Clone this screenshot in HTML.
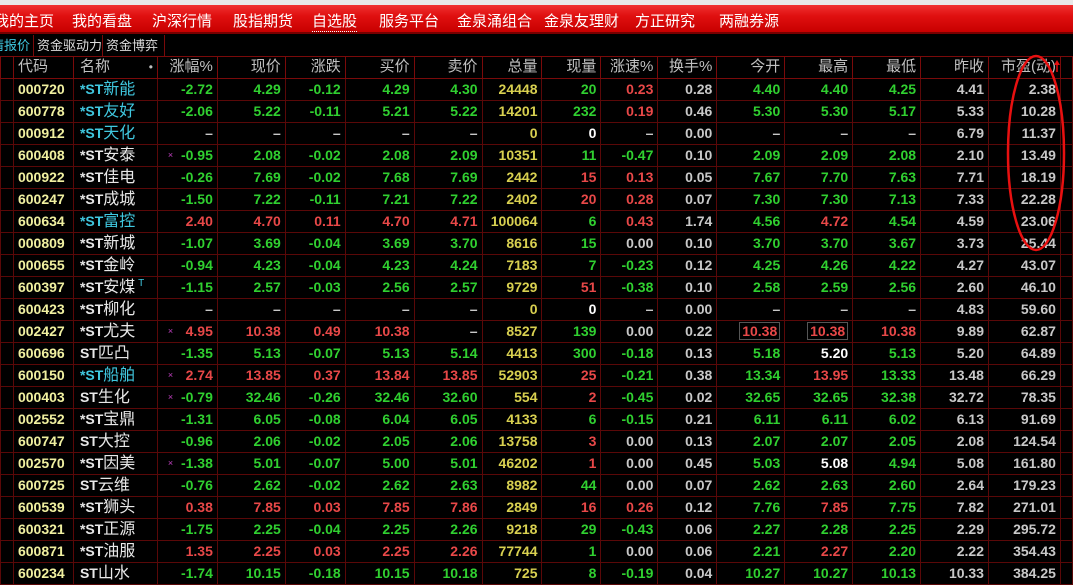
<!DOCTYPE html>
<html><head><meta charset="utf-8"><style>
*{margin:0;padding:0;box-sizing:border-box}
body{width:1073px;height:576px;background:#000;overflow:hidden;position:relative;font-family:"Liberation Sans","Noto Sans CJK SC",sans-serif}
#top{position:absolute;left:0;top:0;width:1073px;height:5px;background:#e8e8e8}
#nav{position:absolute;left:0;top:5px;width:1073px;height:29px;background:linear-gradient(#f03030,#e01010 40%,#c80000);border-bottom:2px solid #700}
#nav span{position:absolute;top:5px;color:#fff;font-size:15px;white-space:nowrap}
#tabs{position:absolute;left:0;top:35px;height:22px;width:1073px;overflow:hidden}
#tabs span{position:absolute;top:0;height:22px;line-height:21px;font-size:13px;color:#ddd;border-right:1px solid #7a0a0a;padding:0 3px;white-space:nowrap;overflow:hidden}
table{position:absolute;left:0;top:56px;border-collapse:collapse;table-layout:fixed}
tr{height:21.9px}
td{height:21.9px;border:1px solid #5a0808;font-size:14px;font-weight:bold;text-align:right;padding:0 4px 0 0;white-space:nowrap;overflow:hidden;color:#c8c8c8;line-height:20px}
tr.h td{font-weight:normal;font-size:15px;color:#c0c0c0;border-color:#7a0a0a}
td.c{color:#f0f0a0;text-align:left;padding-left:4px}
td.n{text-align:left;padding-left:6px;font-weight:normal;font-size:16px;color:#e8e8e8}
td.n b{font-weight:bold;font-size:14px}
td.n.cy{color:#40c8e0}
.g{color:#30d030}.r{color:#e84848}.y{color:#d8d050}.w{color:#fff}
.x{color:#c040c0;font-size:9px;float:left;margin-left:10px;font-weight:normal}
.bx{border:1px solid #555;padding:0 2px}
.t{color:#40c8e0;font-size:10px;position:relative;top:-6px;line-height:10px}
</style></head><body>
<div id="top"></div>
<div id="nav">
<span style="left:-6px">我的主页</span><span style="left:72px">我的看盘</span><span style="left:152px">沪深行情</span><span style="left:233px">股指期货</span><span style="left:312px;border-bottom:1px dotted #fff">自选股</span><span style="left:379px">服务平台</span><span style="left:457px">金泉涌组合</span><span style="left:544px">金泉友理财</span><span style="left:635px">方正研究</span><span style="left:719px">两融券源</span>
</div>
<div id="tabs"><span style="left:-12px;color:#40c8e0;width:46px">情报价</span><span style="left:34px;width:69px">资金驱动力</span><span style="left:103px;width:62px">资金博弈</span></div>
<table>
<colgroup><col style="width:13px"><col style="width:60px"><col style="width:84px"><col style="width:60px"><col style="width:68px"><col style="width:60px"><col style="width:69px"><col style="width:68px"><col style="width:60px"><col style="width:59px"><col style="width:57px"><col style="width:59px"><col style="width:68px"><col style="width:68px"><col style="width:68px"><col style="width:68px"><col style="width:72px"><col style="width:12px"></colgroup>
<tr class="h"><td></td><td style="text-align:left;padding-left:4px">代码</td><td style="text-align:left;padding-left:6px">名称 <span style="float:right;font-size:12px">•</span></td><td>涨幅%</td><td>现价</td><td>涨跌</td><td>买价</td><td>卖价</td><td>总量</td><td>现量</td><td>涨速%</td><td>换手%</td><td>今开</td><td>最高</td><td>最低</td><td>昨收</td><td>市盈(动)</td><td></td></tr>
<tr style="border-bottom:1px solid #40a040"><td></td><td class="c">000720</td><td class="n cy"><b>*ST</b>新能</td><td class="g">-2.72</td><td class="g">4.29</td><td class="g">-0.12</td><td class="g">4.29</td><td class="g">4.30</td><td class="y">24448</td><td class="g">20</td><td class="r">0.23</td><td>0.28</td><td class="g">4.40</td><td class="g">4.40</td><td class="g">4.25</td><td>4.41</td><td>2.38</td><td></td></tr>
<tr><td></td><td class="c">600778</td><td class="n cy"><b>*ST</b>友好</td><td class="g">-2.06</td><td class="g">5.22</td><td class="g">-0.11</td><td class="g">5.21</td><td class="g">5.22</td><td class="y">14201</td><td class="g">232</td><td class="r">0.19</td><td>0.46</td><td class="g">5.30</td><td class="g">5.30</td><td class="g">5.17</td><td>5.33</td><td>10.28</td><td></td></tr>
<tr><td></td><td class="c">000912</td><td class="n cy"><b>*ST</b>天化</td><td>–</td><td>–</td><td>–</td><td>–</td><td>–</td><td class="y">0</td><td class="w">0</td><td>–</td><td>0.00</td><td>–</td><td>–</td><td>–</td><td>6.79</td><td>11.37</td><td></td></tr>
<tr><td></td><td class="c">600408</td><td class="n"><b>*ST</b>安泰</td><td class="g"><span class="x">×</span>-0.95</td><td class="g">2.08</td><td class="g">-0.02</td><td class="g">2.08</td><td class="g">2.09</td><td class="y">10351</td><td class="g">11</td><td class="g">-0.47</td><td>0.10</td><td class="g">2.09</td><td class="g">2.09</td><td class="g">2.08</td><td>2.10</td><td>13.49</td><td></td></tr>
<tr><td></td><td class="c">000922</td><td class="n"><b>*ST</b>佳电</td><td class="g">-0.26</td><td class="g">7.69</td><td class="g">-0.02</td><td class="g">7.68</td><td class="g">7.69</td><td class="y">2442</td><td class="r">15</td><td class="r">0.13</td><td>0.05</td><td class="g">7.67</td><td class="g">7.70</td><td class="g">7.63</td><td>7.71</td><td>18.19</td><td></td></tr>
<tr><td></td><td class="c">600247</td><td class="n"><b>*ST</b>成城</td><td class="g">-1.50</td><td class="g">7.22</td><td class="g">-0.11</td><td class="g">7.21</td><td class="g">7.22</td><td class="y">2402</td><td class="r">20</td><td class="r">0.28</td><td>0.07</td><td class="g">7.30</td><td class="g">7.30</td><td class="g">7.13</td><td>7.33</td><td>22.28</td><td></td></tr>
<tr><td></td><td class="c">600634</td><td class="n cy"><b>*ST</b>富控</td><td class="r">2.40</td><td class="r">4.70</td><td class="r">0.11</td><td class="r">4.70</td><td class="r">4.71</td><td class="y">100064</td><td class="g">6</td><td class="r">0.43</td><td>1.74</td><td class="g">4.56</td><td class="r">4.72</td><td class="g">4.54</td><td>4.59</td><td>23.06</td><td></td></tr>
<tr><td></td><td class="c">000809</td><td class="n"><b>*ST</b>新城</td><td class="g">-1.07</td><td class="g">3.69</td><td class="g">-0.04</td><td class="g">3.69</td><td class="g">3.70</td><td class="y">8616</td><td class="g">15</td><td>0.00</td><td>0.10</td><td class="g">3.70</td><td class="g">3.70</td><td class="g">3.67</td><td>3.73</td><td>25.44</td><td></td></tr>
<tr><td></td><td class="c">000655</td><td class="n"><b>*ST</b>金岭</td><td class="g">-0.94</td><td class="g">4.23</td><td class="g">-0.04</td><td class="g">4.23</td><td class="g">4.24</td><td class="y">7183</td><td class="g">7</td><td class="g">-0.23</td><td>0.12</td><td class="g">4.25</td><td class="g">4.26</td><td class="g">4.22</td><td>4.27</td><td>43.07</td><td></td></tr>
<tr><td></td><td class="c">600397</td><td class="n"><b>*ST</b>安煤<span class="t"> T</span></td><td class="g">-1.15</td><td class="g">2.57</td><td class="g">-0.03</td><td class="g">2.56</td><td class="g">2.57</td><td class="y">9729</td><td class="r">51</td><td class="g">-0.38</td><td>0.10</td><td class="g">2.58</td><td class="g">2.59</td><td class="g">2.56</td><td>2.60</td><td>46.10</td><td></td></tr>
<tr><td></td><td class="c">600423</td><td class="n"><b>*ST</b>柳化</td><td>–</td><td>–</td><td>–</td><td>–</td><td>–</td><td class="y">0</td><td class="w">0</td><td>–</td><td>0.00</td><td>–</td><td>–</td><td>–</td><td>4.83</td><td>59.60</td><td></td></tr>
<tr><td></td><td class="c">002427</td><td class="n"><b>*ST</b>尤夫</td><td class="r"><span class="x">×</span>4.95</td><td class="r">10.38</td><td class="r">0.49</td><td class="r">10.38</td><td>–</td><td class="y">8527</td><td class="g">139</td><td>0.00</td><td>0.22</td><td class="r"><span class="bx">10.38</span></td><td class="r"><span class="bx">10.38</span></td><td class="r">10.38</td><td>9.89</td><td>62.87</td><td></td></tr>
<tr><td></td><td class="c">600696</td><td class="n"><b>ST</b>匹凸</td><td class="g">-1.35</td><td class="g">5.13</td><td class="g">-0.07</td><td class="g">5.13</td><td class="g">5.14</td><td class="y">4413</td><td class="g">300</td><td class="g">-0.18</td><td>0.13</td><td class="g">5.18</td><td class="w">5.20</td><td class="g">5.13</td><td>5.20</td><td>64.89</td><td></td></tr>
<tr><td></td><td class="c">600150</td><td class="n cy"><b>*ST</b>船舶</td><td class="r"><span class="x">×</span>2.74</td><td class="r">13.85</td><td class="r">0.37</td><td class="r">13.84</td><td class="r">13.85</td><td class="y">52903</td><td class="r">25</td><td class="g">-0.21</td><td>0.38</td><td class="g">13.34</td><td class="r">13.95</td><td class="g">13.33</td><td>13.48</td><td>66.29</td><td></td></tr>
<tr><td></td><td class="c">000403</td><td class="n"><b>ST</b>生化</td><td class="g"><span class="x">×</span>-0.79</td><td class="g">32.46</td><td class="g">-0.26</td><td class="g">32.46</td><td class="g">32.60</td><td class="y">554</td><td class="r">2</td><td class="g">-0.45</td><td>0.02</td><td class="g">32.65</td><td class="g">32.65</td><td class="g">32.38</td><td>32.72</td><td>78.35</td><td></td></tr>
<tr><td></td><td class="c">002552</td><td class="n"><b>*ST</b>宝鼎</td><td class="g">-1.31</td><td class="g">6.05</td><td class="g">-0.08</td><td class="g">6.04</td><td class="g">6.05</td><td class="y">4133</td><td class="g">6</td><td class="g">-0.15</td><td>0.21</td><td class="g">6.11</td><td class="g">6.11</td><td class="g">6.02</td><td>6.13</td><td>91.69</td><td></td></tr>
<tr><td></td><td class="c">600747</td><td class="n"><b>ST</b>大控</td><td class="g">-0.96</td><td class="g">2.06</td><td class="g">-0.02</td><td class="g">2.05</td><td class="g">2.06</td><td class="y">13758</td><td class="r">3</td><td>0.00</td><td>0.13</td><td class="g">2.07</td><td class="g">2.07</td><td class="g">2.05</td><td>2.08</td><td>124.54</td><td></td></tr>
<tr><td></td><td class="c">002570</td><td class="n"><b>*ST</b>因美</td><td class="g"><span class="x">×</span>-1.38</td><td class="g">5.01</td><td class="g">-0.07</td><td class="g">5.00</td><td class="g">5.01</td><td class="y">46202</td><td class="r">1</td><td>0.00</td><td>0.45</td><td class="g">5.03</td><td class="w">5.08</td><td class="g">4.94</td><td>5.08</td><td>161.80</td><td></td></tr>
<tr><td></td><td class="c">600725</td><td class="n"><b>ST</b>云维</td><td class="g">-0.76</td><td class="g">2.62</td><td class="g">-0.02</td><td class="g">2.62</td><td class="g">2.63</td><td class="y">8982</td><td class="g">44</td><td>0.00</td><td>0.07</td><td class="g">2.62</td><td class="g">2.63</td><td class="g">2.60</td><td>2.64</td><td>179.23</td><td></td></tr>
<tr><td></td><td class="c">600539</td><td class="n"><b>*ST</b>狮头</td><td class="r">0.38</td><td class="r">7.85</td><td class="r">0.03</td><td class="r">7.85</td><td class="r">7.86</td><td class="y">2849</td><td class="r">16</td><td class="r">0.26</td><td>0.12</td><td class="g">7.76</td><td class="r">7.85</td><td class="g">7.75</td><td>7.82</td><td>271.01</td><td></td></tr>
<tr><td></td><td class="c">600321</td><td class="n"><b>*ST</b>正源</td><td class="g">-1.75</td><td class="g">2.25</td><td class="g">-0.04</td><td class="g">2.25</td><td class="g">2.26</td><td class="y">9218</td><td class="g">29</td><td class="g">-0.43</td><td>0.06</td><td class="g">2.27</td><td class="g">2.28</td><td class="g">2.25</td><td>2.29</td><td>295.72</td><td></td></tr>
<tr><td></td><td class="c">600871</td><td class="n"><b>*ST</b>油服</td><td class="r">1.35</td><td class="r">2.25</td><td class="r">0.03</td><td class="r">2.25</td><td class="r">2.26</td><td class="y">77744</td><td class="g">1</td><td>0.00</td><td>0.06</td><td class="g">2.21</td><td class="r">2.27</td><td class="g">2.20</td><td>2.22</td><td>354.43</td><td></td></tr>
<tr><td></td><td class="c">600234</td><td class="n"><b>ST</b>山水</td><td class="g">-1.74</td><td class="g">10.15</td><td class="g">-0.18</td><td class="g">10.15</td><td class="g">10.18</td><td class="y">725</td><td class="g">8</td><td class="g">-0.19</td><td>0.04</td><td class="g">10.27</td><td class="g">10.27</td><td class="g">10.13</td><td>10.33</td><td>384.25</td><td></td></tr>
</table>
<svg style="position:absolute;left:0;top:0" width="1073" height="576">
<ellipse cx="1036" cy="153" rx="28" ry="97" fill="none" stroke="#e81010" stroke-width="2.5"/>
<line x1="1057" y1="72" x2="1057" y2="62" stroke="#e81010" stroke-width="1.5"/>
<path d="M1054 65 L1057 60 L1060 65Z" fill="#e81010"/>
</svg>
</body></html>
